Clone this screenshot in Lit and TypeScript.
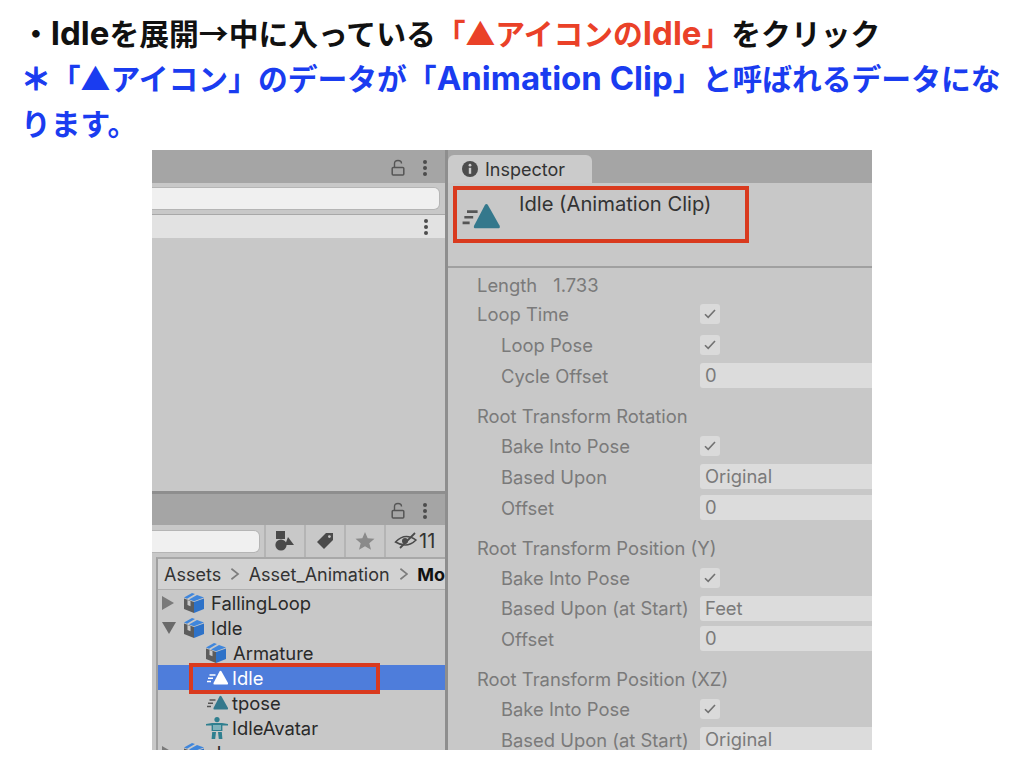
import { LitElement, html, css } from "lit";
import { customElement } from "lit/decorators.js";

const lock = html`<svg class="lock" width="14" height="18" viewBox="0 0 14 18"><path d="M3.5 8V4.6C3.5 2.6 5 1.5 7 1.5s3.5 1.1 3.5 3" fill="none" stroke="#555" stroke-width="1.4"/><rect x="1.2" y="8.4" width="11.6" height="7.6" rx="1" fill="none" stroke="#555" stroke-width="1.5"/></svg>`;
const dots = html`<svg class="dots" width="6" height="18" viewBox="0 0 6 18"><circle cx="3" cy="3" r="2" fill="#4c4c4c"/><circle cx="3" cy="9" r="2" fill="#4c4c4c"/><circle cx="3" cy="15" r="2" fill="#4c4c4c"/></svg>`;
const cube = html`<svg class="cube" width="22" height="22" viewBox="0 0 22 22"><path d="M1 6.5 11 10v11L1 17z" fill="#5c5c5c"/><path d="M4.5 8v5l3 1.2V9.2z" fill="#c8c8c8"/><path d="M11 10l10-3.5V17l-10 4z" fill="#2e72c8"/><path d="M1 5.5 9 1l3 1-8 4.7z M6 7.6 14 3l7 2.6-10 3.6z" fill="#3f86dc"/></svg>`;
const clip = (c: string, w = 22, h = 17) => html`<svg width=${w} height=${h} viewBox="0 0 22 17"><path d="M12.5 2.5 Q13.5 1 14.5 2.5 L21 14 Q21.5 15.5 20 15.5 H7.5 Q6 15.5 6.5 14Z" fill=${c}/><path d="M2.5 6h6M1 9.2h5M0 12.4h4" stroke=${c === "#fff" ? "#fff" : "#555"} stroke-width="1.5" fill="none"/></svg>`;
const avatar = html`<svg width="24" height="24" viewBox="0 0 24 24"><circle cx="12" cy="3.6" r="2.6" fill="#2f7f8f"/><path d="M1 8l6-1h10l6 1v1.6l-5.6 0 0 5.4H6.6V9.6L1 9.6z" fill="#2f7f8f"/><path d="M8 9h8v5H8z" fill="#7fb2bb"/><path d="M7.2 16h3.8l-.8 7H6.6zM13 16h3.8l.6 7h-3.6z" fill="#2f7f8f"/></svg>`;
const shapes = html`<svg width="20" height="20" viewBox="0 0 20 20"><rect x="1" y="0" width="9" height="8" fill="#4a4a4a"/><circle cx="6" cy="14" r="5.6" fill="#4a4a4a"/><path d="M13 6l6 8h-9z" fill="#4a4a4a"/></svg>`;
const tag = html`<svg width="18" height="18" viewBox="0 0 18 18"><path d="M10 1h7v7l-9 9-7-7z" fill="#4a4a4a"/><circle cx="13.4" cy="4.6" r="1.4" fill="#c8c8c8"/></svg>`;
const star = html`<svg width="20" height="18" viewBox="0 0 20 18"><path d="M10 0l2.7 6.3 6.8.5-5.2 4.4 1.7 6.6L10 14.3 4 17.8l1.7-6.6L.5 6.8l6.8-.5z" fill="#8a8a8a"/></svg>`;
const eye = html`<svg width="24" height="18" viewBox="0 0 24 18"><path d="M1.5 10Q11 0 22 8 13 17 1.5 10z" fill="none" stroke="#4a4a4a" stroke-width="1.5"/><circle cx="11" cy="9" r="3" fill="#4a4a4a"/><path d="M6 16 21 1" stroke="#4a4a4a" stroke-width="1.8"/></svg>`;
const check = html`<svg width="12" height="10" viewBox="0 0 12 10"><path d="M1 5.2 4.2 8.4 11 1" fill="none" stroke="#727272" stroke-width="1.6"/></svg>`;
const info = html`<svg width="16" height="16" viewBox="0 0 16 16"><circle cx="8" cy="8" r="8" fill="#4c4c4c"/><circle cx="8" cy="4.2" r="1.4" fill="#ccc"/><rect x="6.8" y="6.8" width="2.4" height="6" fill="#ccc"/></svg>`;
const chevron = html`<svg width="10" height="14" viewBox="0 0 10 14"><path d="M1.5 1.5 8.5 7 1.5 12.5" fill="none" stroke="#7d7d7d" stroke-width="1.7"/></svg>`;

type Row = { label: string; kind?: "head" | "sub"; check?: boolean; value?: string };
const sections: Row[][] = [
  [
    { label: "Loop Time", kind: "head", check: true },
    { label: "Loop Pose", kind: "sub", check: true },
    { label: "Cycle Offset", kind: "sub", value: "0" },
  ],
  [
    { label: "Root Transform Rotation", kind: "head" },
    { label: "Bake Into Pose", kind: "sub", check: true },
    { label: "Based Upon", kind: "sub", value: "Original" },
    { label: "Offset", kind: "sub", value: "0" },
  ],
  [
    { label: "Root Transform Position (Y)", kind: "head" },
    { label: "Bake Into Pose", kind: "sub", check: true },
    { label: "Based Upon (at Start)", kind: "sub", value: "Feet" },
    { label: "Offset", kind: "sub", value: "0" },
  ],
  [
    { label: "Root Transform Position (XZ)", kind: "head" },
    { label: "Bake Into Pose", kind: "sub", check: true },
    { label: "Based Upon (at Start)", kind: "sub", value: "Original" },
  ],
];

@customElement("app-root")
export class AppRoot extends LitElement {
  static styles = css`
    :host { display: block; width: 1024px; height: 768px; background: #fff; overflow: hidden; font-family: Inter, "Liberation Sans", sans-serif; }
    .title { padding: 10px 0 0 21px; font: 700 29.8px/45px "Noto Sans CJK JP", sans-serif; color: #111; white-space: nowrap; height: 150px; box-sizing: border-box; }
    .line { height: 45px; }
    .lat { font-family: Inter, "Liberation Sans", sans-serif; font-size: 33px; line-height: 0; }
    .star { -webkit-text-stroke: 1px #1a3cf0; }
    .red { color: #ea4128; }
    .blue { color: #1a3cf0; }
    .editor { display: flex; width: 720px; height: 600px; margin-left: 152px; background: #c8c8c8; overflow: hidden; font-size: 18.4px; color: #222; }
    .left { width: 293px; flex: none; display: flex; flex-direction: column; border-right: 3px solid #8e8e8e; }
    .tabbar { height: 33px; flex: none; background: #a5a5a5; display: flex; align-items: center; justify-content: flex-end; gap: 17px; padding: 2px 17px 0 0; box-sizing: border-box; }
    .search { height: 32px; flex: none; display: flex; align-items: center; border-bottom: 1px solid #a8a8a8; box-sizing: border-box; }
    .field { height: 23px; flex: 1; margin-right: 5px; background: #f0f0f0; border: 1px solid #b5b5b5; border-left: 0; border-radius: 0 6px 6px 0; box-sizing: border-box; }
    .lightrow { height: 23px; flex: none; background: #e2e2e2; display: flex; align-items: center; justify-content: flex-end; padding-right: 16px; box-sizing: border-box; }
    .empty { flex: 1; background: #c8c8c8; border-bottom: 3px solid #8e8e8e; }
    .bottom { height: 256px; flex: none; display: flex; flex-direction: column; }
    .bottom .tabbar { height: 31px; }
    .toolbar { height: 32px; flex: none; display: flex; align-items: center; box-sizing: border-box; }
    .toolbar .field { width: 108px; flex: none; margin: 0 4px 0 0; }
    .tool { width: 40px; height: 32px; flex: none; display: flex; align-items: center; justify-content: center; border-left: 2px solid #b4b4b4; box-sizing: border-box; }
    .eyebtn { width: 61px; justify-content: flex-start; padding-left: 8px; gap: 1px; font-size: 20px; color: #333; }
    .browser { flex: 1; margin-left: 4px; border-left: 2px solid #a0a0a0; border-top: 2px solid #a8a8a8; position: relative; overflow: hidden; }
    .crumbs { height: 31px; background: #d2d2d2; display: flex; align-items: center; gap: 9px; padding-left: 6px; white-space: nowrap; overflow: hidden; color: #333; border-bottom: 1px solid #b0b0b0; box-sizing: border-box; font-size: 18px; }
    .crumbs b { color: #111; }
    .tree { display: flex; flex-direction: column; }
    .item { position: relative; height: 25px; flex: none; display: flex; align-items: center; gap: 3px; white-space: nowrap; color: #2a2a2a; box-sizing: border-box; }
    .item .cube { margin-right: 3px; }
    .item.sel { background: #4e7ddb; color: #fff; }
    .indent0 { padding-left: 25px; }
    .indent1 { padding-left: 47px; }
    .indent2 { padding-left: 49px; }
    .tri { position: absolute; left: 3px; }
    .redbox { position: absolute; border: 4px solid #d93a1e; box-sizing: border-box; pointer-events: none; }
    .r1 { left: 31px; top: 104px; width: 191px; height: 31px; }
    .right { flex: 1; display: flex; flex-direction: column; min-width: 0; position: relative; }
    .itab { height: 33px; flex: none; background: #a5a5a5; display: flex; align-items: flex-end; }
    .itab div { width: 144px; height: 28px; background: #cbcbcb; border-radius: 6px 6px 0 0; display: flex; align-items: center; gap: 7px; padding-left: 14px; box-sizing: border-box; color: #333; font-size: 18px; }
    .header { height: 85px; flex: none; background: #c8c8c8; border-bottom: 2px solid #a0a0a0; display: flex; gap: 17px; padding: 8px 0 0 14px; box-sizing: border-box; color: #333; font-size: 20.2px; white-space: nowrap; }
    .header svg { margin-top: 10px; }
    .r2 { left: 5px; top: 36px; width: 296px; height: 57px; }
    .props { padding: 3px 0 0 29px; color: #7a7a7a; font-size: 18.4px; white-space: nowrap; }
    .row { height: 31px; display: flex; align-items: center; }
    .row.head { height: 28px; }
    .section:nth-child(2) .row.head { height: 31px; }
    .section:nth-child(4) .row:nth-child(3) { height: 30px; }
    .row.len { height: 27px; gap: 16px; }
    .section + .section { margin-top: 11px; }
    .lab { flex: none; width: 223px; box-sizing: border-box; }
    .sub .lab { padding-left: 24px; }
    .cb { width: 20px; height: 20px; background: #dadada; border-radius: 3px; display: flex; align-items: center; justify-content: center; }
    .val { flex: 1; height: 25px; background: #dcdcdc; border-radius: 3px 0 0 3px; padding-left: 5px; line-height: 25px; color: #7a7a7a; }
  `;

  rowT(r: Row) {
    return html`<div class="row ${r.kind ?? ""}">
      <div class="lab">${r.label}</div>
      ${r.check ? html`<div class="cb">${check}</div>` : ""}
      ${r.value ? html`<div class="val">${r.value}</div>` : ""}
    </div>`;
  }

  render() {
    return html`
      <div class="title">
        <div class="line">・<span class="lat">Idle</span>を展開→中に入っている<span class="red">「▲アイコンの<span class="lat">Idle</span>」</span>をクリック</div>
        <div class="line blue"><span class="star">＊</span>「▲アイコン」のデータが「<span class="lat">Animation Clip</span>」と呼ばれるデータにな</div>
        <div class="line blue">ります。</div>
      </div>
      <div class="editor">
        <div class="left">
          <div class="tabbar">${lock}${dots}</div>
          <div class="search"><div class="field"></div></div>
          <div class="lightrow">${dots}</div>
          <div class="empty"></div>
          <div class="bottom">
            <div class="tabbar">${lock}${dots}</div>
            <div class="toolbar">
              <div class="field"></div>
              <div class="tool">${shapes}</div>
              <div class="tool">${tag}</div>
              <div class="tool">${star}</div>
              <div class="tool eyebtn">${eye}11</div>
            </div>
            <div class="browser">
              <div class="crumbs"><span>Assets</span>${chevron}<span>Asset_Animation</span>${chevron}<b>Mo</b></div>
              <div class="tree">
                <div class="item indent0"><svg class="tri" width="14" height="16" viewBox="0 0 14 16"><path d="M1 1l12 7-12 7z" fill="#7a7a7a"/></svg>${cube}<span>FallingLoop</span></div>
                <div class="item indent0"><svg class="tri" width="16" height="14" viewBox="0 0 16 14"><path d="M1 1h14L8 13z" fill="#6a6a6a"/></svg>${cube}<span>Idle</span></div>
                <div class="item indent1">${cube}<span>Armature</span></div>
                <div class="item indent2 sel">${clip("#fff")}<span>Idle</span></div>
                <div class="item indent2">${clip("#34788c")}<span>tpose</span></div>
                <div class="item indent1">${avatar}<span>IdleAvatar</span></div>
                <div class="item indent0"><svg class="tri" width="14" height="16" viewBox="0 0 14 16"><path d="M1 1l12 7-12 7z" fill="#7a7a7a"/></svg>${cube}<span>Jumps</span></div>
              </div>
              <div class="redbox r1"></div>
            </div>
          </div>
        </div>
        <div class="right">
          <div class="itab"><div>${info}<span>Inspector</span></div></div>
          <div class="header">${clip("#34788c", 40, 30)}<span>Idle (Animation Clip)</span></div>
          <div class="redbox r2"></div>
          <div class="props">
            <div class="row len"><span>Length</span><span>1.733</span></div>
            ${sections.map((s) => html`<div class="section">${s.map((r) => this.rowT(r))}</div>`)}
          </div>
        </div>
      </div>
    `;
  }
}
